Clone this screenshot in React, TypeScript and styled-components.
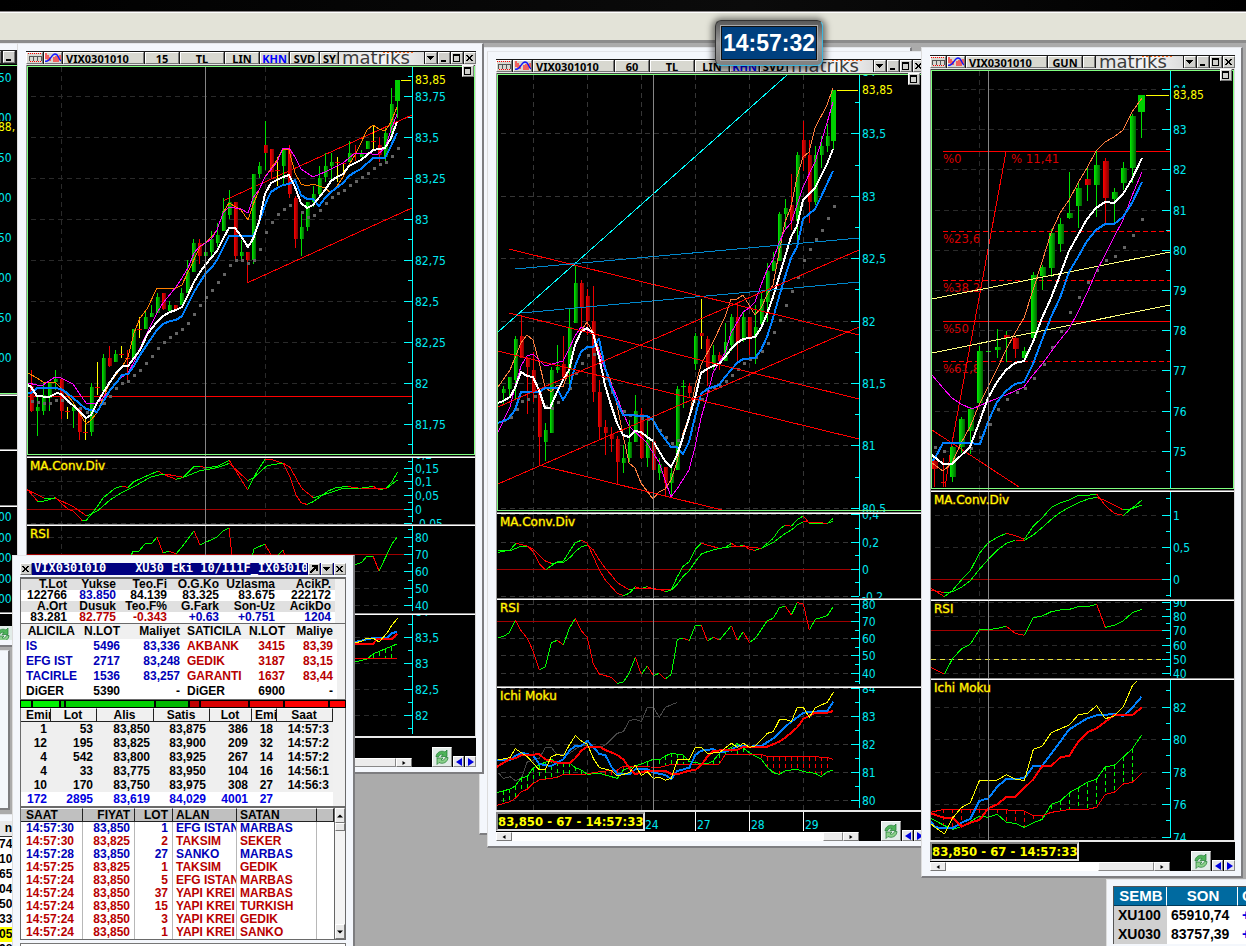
import React from "react";
import styled, { createGlobalStyle, css } from "styled-components";

const GlobalStyle = createGlobalStyle`
  * { box-sizing: border-box; }
  body { margin: 0; background: #ababab; font-family: "Liberation Sans", Arial, sans-serif; }
  button { font: inherit; padding: 0; margin: 0; cursor: default; }
`;

/* ---------- geometry helpers ---------- */

type Pt = [number, number];
type Candle = [number, number, number, number, number, string];
type Line = { d: string; c: string; w?: number; dash?: string };

const parse = (s: string): Pt[] =>
  s.trim().split(/\s+/).map((p) => p.split(",").map(Number) as Pt);

/* samples recorded at three units per pixel, relative to an origin */
const fine = (ox: number, oy: number, s: string): Pt[] =>
  parse(s).map(([x, y]) => [ox + x / 3, oy + y / 3] as Pt);

const pathOf = (pts: Pt[]) => "M" + pts.map((p) => p.join(" ")).join("L");
const line = (s: string, c: string, w = 1): Line => ({ d: pathOf(parse(s)), c, w });
const fineLine = (ox: number, oy: number, s: string, c: string, w = 1): Line => ({
  d: pathOf(fine(ox, oy, s)),
  c,
  w,
});

const candles = (s: string): Candle[] =>
  s.trim().split(/\s*;\s*/).filter(Boolean).map((row) => {
    const f = row.split(/\s+/);
    return [+f[0], +f[1], +f[2], +f[3], +f[4], f[5]] as Candle;
  });

/* rising parts green, falling parts red */
const trend = (pts: Pt[]): Line[] => {
  let up = "";
  let down = "";
  for (let i = 1; i < pts.length; i++) {
    const seg = `M${pts[i - 1].join(" ")}L${pts[i].join(" ")}`;
    if (pts[i][1] > pts[i - 1][1]) down += seg;
    else up += seg;
  }
  return [
    { d: up, c: "#00ff00" },
    { d: down, c: "#ff0000" },
  ];
};

const valueAt = (pts: Pt[], x: number) => {
  for (let i = 1; i < pts.length; i++) {
    if (x <= pts[i][0]) {
      const [x0, y0] = pts[i - 1];
      const [x1, y1] = pts[i];
      return y0 + ((y1 - y0) * (x - x0)) / (x1 - x0);
    }
  }
  return pts[pts.length - 1][1];
};

/* kumo: two bounds with a dashed fill between them */
const cloud = (a: Pt[], b: Pt[], step: number, from: number): Line[] => {
  let g = "";
  let r = "";
  const end = a[a.length - 1][0] - 2;
  for (let x = from; x < end; x += step) {
    const ya = valueAt(a, x);
    const yb = valueAt(b, x);
    if (Math.abs(ya - yb) < 3) continue;
    const seg = `M${x} ${Math.min(ya, yb)}V${Math.max(ya, yb)}`;
    if (ya < yb) g += seg;
    else r += seg;
  }
  return [
    { d: g, c: "#00ff00", dash: "4 3" },
    { d: r, c: "#ff0000", dash: "4 3" },
    { d: pathOf(a), c: "#00ff00" },
    { d: pathOf(b), c: "#ff0000" },
  ];
};

/* ---------- window chrome ---------- */

const Desktop = styled.main`
  position: relative;
  height: 100vh;
  min-height: 600px;
  overflow: hidden;
  background: #ababab;
`;

const TopBlack = styled.div`
  height: 12px;
  background: linear-gradient(90deg, #000, #0b0b0b 60%, #000);
  border-bottom: 1px solid #8a8688;
`;

const TopBar = styled.header`
  height: 31px;
  background: #e3e3d8;
  border-top: 1px solid #fff;
  border-bottom: 3px solid #8c8c8c;
`;

const Frame = styled.section<{ $x: number; $y: number; $w: number; $h?: number }>`
  position: absolute;
  left: ${(p) => p.$x}px;
  top: ${(p) => p.$y}px;
  width: ${(p) => p.$w}px;
  ${(p) => p.$h && css`height: ${p.$h}px;`}
  display: flex;
  flex-direction: column;
  background: #f4f7fc;
  border: solid;
  border-width: 1px 2px 2px 1px;
  border-color: #e4e6ea #7d7d80 #7d7d80 #dcdcdc;
  padding: 7px 6px 5px 8px;
  overflow: hidden;
`;

const Toolbar = styled.div`
  display: flex;
  height: 14px;
  padding: 1px 0;
  background: #1a1a1a;
  gap: 1px;
  border-bottom: 1px solid #e8e8e8;
`;

const Tool = styled.button<{ $w: number; $on?: boolean; $left?: boolean }>`
  flex: none;
  width: ${(p) => p.$w}px;
  height: 12px;
  border: 1px solid;
  border-color: #fff #777 #777 #fff;
  background: #d8d8d0;
  overflow: hidden;
  white-space: nowrap;
  font: bold 11px/9px "Noto Sans", sans-serif;
  color: ${(p) => (p.$on ? "#0000ff" : "#000")};
  text-align: ${(p) => (p.$left ? "left" : "center")};
  padding-left: ${(p) => (p.$left ? 2 : 0)}px;
  display: block;
`;

const Logo = styled.div`
  flex: 1;
  min-width: 0;
  height: 12px;
  padding-left: 3px;
  background:
    repeating-linear-gradient(90deg, #ff6a20 0 2px, transparent 2px 4px) 80% 0 / 30px 1px no-repeat,
    linear-gradient(90deg, #e0e0e0, #f6f6f6 60%, #dcdcdc);
  color: #3c3c3c;
  font: 18px/11px "DejaVu Sans", sans-serif;
  overflow: hidden;
`;

const CapButton = styled.button`
  flex: none;
  width: 12px;
  height: 12px;
  display: grid;
  place-items: center;
  background: #d0d0cc;
  border: 1px solid;
  border-color: #fff #777 #777 #fff;
`;

const Glyph = ({ d, size = 8 }: { d: string; size?: number }) => (
  <svg width={size} height={size} viewBox="0 0 8 8" shapeRendering="crispEdges">
    <path d={d} fill="#000" fillRule="evenodd" />
  </svg>
);
const DOWN = "M0 2h7v1H6v1H5v1H4v1H3V5H2V4H1V3H0z";
const MIN = "M1 6h5v2H1z";
const MAX = "M0 0h7v8H0zM1 2h5v5H1z";
const CLOSE = "M0 1h2v1h1v1h1V2h1V1h2v1H6v1H5v2h1v1h1v1H5V6H4V5H3v1H2v1H0V6h1V5h1V3H1V2H0z";

const BarsIcon = () => (
  <svg width="14" height="10" viewBox="0 0 14 10" shapeRendering="crispEdges">
    <path d="M0 .5h14M2 8.500h11" stroke="#f00" strokeDasharray="1 1" />
    <path d="M1 8V3h12v5M5 3v5M9 3v5" fill="none" stroke="#555" />
  </svg>
);
const WaveIcon = () => (
  <svg width="16" height="10" viewBox="0 0 16 10">
    <path d="M1 0v6M3 2v5M5 4v4M9 4v5M11 3v6M13 3v6M15 2v5" stroke="#f22" strokeWidth="1.300" />
    <path d="M0 8C5 10 6 1 10 1s3 5 6 7" fill="none" stroke="#11f" strokeWidth="1.300" />
  </svg>
);

const Captions = () => (
  <>
    <CapButton aria-label="Menu"><Glyph d={DOWN} /></CapButton>
    <CapButton aria-label="Minimize"><Glyph d={MIN} /></CapButton>
    <CapButton aria-label="Maximize"><Glyph d={MAX} /></CapButton>
    <CapButton aria-label="Close"><Glyph d={CLOSE} /></CapButton>
  </>
);

/* ---------- charts ---------- */

const Body = styled.div`
  position: relative;
  display: flex;
  flex-direction: column;
`;

const Restore = styled(CapButton)<{ $x: number }>`
  position: absolute;
  left: ${(p) => p.$x}px;
  top: 0;
`;

const PaneSvg = styled.svg`
  display: block;
  background: #000;
  text {
    font-family: "DejaVu Sans Condensed", "DejaVu Sans", sans-serif;
    font-size: 12px;
  }
  text.title { font-family: "DejaVu Sans", sans-serif; }
  text.note { font-size: 13px; }
`;

const SIGNAL: Record<string, string> = { g: "#00e000", r: "#f00000", y: "#ffff00" };

type PaneProps = {
  x: number; y: number; w: number; h: number; axis: number;
  ticks: [number, string][];
  minor?: number[];
  grid: number[];
  cross: number;
  gridEnd: number;
  gridColor?: string;
  title?: string;
  main?: boolean;
  rule?: number[];
  lines?: Line[];
  bars?: Candle[];
  barWidth?: number;
  under?: Line[];
  dots?: string;
  price?: [number, number];
  notes?: [number, number, string][];
};

const Pane = (p: PaneProps) => {
  const right = p.x + p.w - 1;
  const bottom = p.y + p.h;
  const bw = p.barWidth ?? 4;
  const top = p.y + 2;
  const gridColor = p.gridColor ?? "#2a2a2a";
  return (
    <PaneSvg width="100%" height={p.h} viewBox={`${p.x} ${p.y} ${p.w} ${p.h}`} preserveAspectRatio="xMinYMin slice">
      <defs>
        <linearGradient id="up"><stop offset="0" stopColor="#00f000" /><stop offset="1" stopColor="#006000" /></linearGradient>
        <linearGradient id="down"><stop offset="0" stopColor="#ff0000" /><stop offset="1" stopColor="#800000" /></linearGradient>
      </defs>
      <g shapeRendering="crispEdges" fill="none">
        {p.grid.map((gx) => (
          <path key={gx} d={`M${gx + 0.5} ${top}V${bottom}`} stroke={gridColor} strokeDasharray="5 4" />
        ))}
        {p.ticks.map(([ty]) => (
          <path key={ty} d={`M${p.x + 5} ${ty + 0.5}H${p.gridEnd}`} stroke={gridColor} strokeDasharray="5 4" />
        ))}
        {p.rule?.map((ry) => <path key={ry} d={`M${p.x + 1} ${ry + 0.5}H${p.axis}`} stroke="#a00000" />)}
        {p.under?.map((l, i) => <path key={i} d={l.d} stroke={l.c} strokeWidth={l.w ?? 1} strokeDasharray={l.dash} />)}
      </g>
      {p.notes?.map(([nx, ny, t]) => <text key={t} className="note" x={nx} y={ny} fill="#d80000">{t}</text>)}
      <g shapeRendering="crispEdges">
        {p.bars?.map(([bx, hi, lo, t, b, k], i, all) => {
          const last = i === all.length - 1;
          const wick = SIGNAL[k[0]];
          const body = k[k.length - 1];
          const half = last ? bw / 2 + 0.5 : bw / 2;
          return (
            <g key={bx}>
              <rect x={bx} y={hi} width="1" height={Math.max(lo - hi, 1)} fill={wick} />
              {body === "y" || b - t < 2 ? (
                <rect x={bx - 2} y={t} width="5" height="1" fill={body === "g" ? SIGNAL.g : SIGNAL.r} />
              ) : (
                <rect x={Math.round(bx + 0.5 - half)} y={t} width={half * 2} height={b - t}
                  fill={last ? "#00d000" : body === "g" ? "url(#up)" : "url(#down)"} />
              )}
            </g>
          );
        })}
      </g>
      <g shapeRendering="crispEdges" fill="none" strokeLinejoin="round">
        {p.dots && parse(p.dots).map(([dx, dy], i) => (
          <rect key={i} x={dx - 1} y={dy - 1} width="3" height="3" fill="#646464" />
        ))}
        {p.lines?.map((l, i) => (
          <path key={i} d={l.d} stroke={l.c} strokeWidth={l.w ?? 1} strokeDasharray={l.dash} />
        ))}
        <path d={`M${p.cross + 0.5} ${p.y}V${bottom}`} stroke="#868686" />
        <path d={`M${p.axis + 0.5} ${top}V${bottom - 2}`} stroke="#00ffff" />
        {p.ticks.map(([ty]) => <path key={ty} d={`M${p.axis - 8} ${ty + 0.5}H${p.axis}`} stroke="#00ffff" />)}
        {p.minor?.map((ty) => <path key={ty} d={`M${p.axis - 4} ${ty + 0.5}H${p.axis}`} stroke="#00ffff" />)}
      </g>
      {p.ticks.map(([ty, t]) => <text key={t} x={p.axis + 3} y={ty + 5} fill="#00e8f0">{t}</text>)}
      {p.price && (
        <>
          <rect x={p.axis + 2} y={p.price[1] - 7} width="40" height="12" fill="#000" />
          <path d={`M${p.price[0]} ${p.price[1] + 0.5}H${p.axis - 1}`} stroke="#ffff00" shapeRendering="crispEdges" />
          <text x={p.axis + 3} y={p.price[1] + 4} fill="#ffff00">83,85</text>
        </>
      )}
      {p.title && (
        <text className="title" x={p.x + 4} y={p.y + 14} fill="#ffff00" stroke="#ffa000" strokeOpacity="0.500" strokeWidth="1" paintOrder="stroke">{p.title}</text>
      )}
      <g shapeRendering="crispEdges" fill="none">
        {p.main ? (
          <>
            <rect x={p.x + 1.5} y={p.y + 1.5} width={p.w - 3} height={p.h - 3} stroke="#80ff80" />
            <path d={`M${p.x} ${p.y + 0.5}H${right}`} stroke="#444" />
          </>
        ) : (
          <>
            <path d={`M${p.x} ${p.y + 0.5}H${right + 1}`} stroke="#909090" />
            <path d={`M${p.x} ${p.y + 1.5}H${right + 1}`} stroke="#ffffff" />
          </>
        )}
        <path d={`M${p.x + 0.5} ${p.y}V${bottom}`} stroke="#9a9a9a" />
        <path d={`M${right + 0.5} ${p.y}V${bottom}`} stroke="#d8d8d8" />
      </g>
    </PaneSvg>
  );
};

/* ---------- footer ---------- */

const Footer = styled.div`
  display: flex;
  align-items: flex-end;
  height: 31px;
  background: #000;
  border-top: 2px solid #e8e8e8;
`;
const FootLeft = styled.div<{ $w: number }>`
  flex: none;
  width: ${(p) => p.$w}px;
  height: 100%;
  display: flex;
  flex-direction: column;
  justify-content: space-between;
`;
const Dates = styled.div`
  display: flex;
  height: 19px;
`;
const Info = styled.output`
  flex: none;
  width: 149px;
  height: 19px;
  border: 2px solid #e0e0e0;
  border-left-color: #888;
  border-top-color: #888;
  color: #ffff00;
  font: bold 13px/16px "DejaVu Sans Condensed", "DejaVu Sans", sans-serif;
  white-space: nowrap;
  overflow: hidden;
`;
const DateCell = styled.span<{ $mark?: boolean }>`
  flex: none;
  width: ${(p) => (p.$mark ? 54 : 50)}px;
  padding: 6px 0 0 1px;
  border-left: ${(p) => (p.$mark ? "1px solid #fff" : "0")};
  color: #00e8f0;
  font: 12px/14px "DejaVu Sans Condensed", "DejaVu Sans", sans-serif;
  &:nth-child(2) { padding-left: 0; }
`;
const ScrollRow = styled.div`
  display: flex;
  height: 9px;
  margin-top: auto;
  background: #fff;
`;
const ScrollEnd = styled.button`
  width: 16px;
  height: 9px;
  display: grid;
  place-items: center;
  border: 1px solid;
  border-color: #fff #777 #777 #fff;
  background: #ececec;
`;
const Track = styled.div<{ $thumb: number }>`
  flex: 1;
  display: flex;
  justify-content: flex-end;
  &::after {
    content: "";
    width: ${(p) => p.$thumb}px;
    border: 1px solid;
    border-color: #fff #888 #888 #fff;
    background: #ececec;
  }
`;
const FootIcons = styled.div`
  display: flex;
  align-items: flex-end;
  margin-left: auto;
  gap: 1px;
`;
const SquareButton = styled.button<{ $s: number }>`
  flex: none;
  width: ${(p) => p.$s}px;
  height: ${(p) => p.$s}px;
  display: grid;
  place-items: center;
  background: #e6e6ea;
  border: 1px solid;
  border-color: #fff #888 #888 #fff;
`;
const RefreshIcon = () => (
  <svg width="18" height="18" viewBox="0 0 18 18">
    <rect width="18" height="18" fill="#e2ece8" />
    <path d="M3 9a6 6 0 0 1 9-5l2-2v6.500H8l2-2a3.500 3.500 0 0 0-4.500 2.500z" fill="#4fb45a" stroke="#1d7a30" strokeWidth=".7" />
    <path d="M15 9.500a6 6 0 0 1-9 5l-2 2V10h6l-2 2a3.500 3.500 0 0 0 4.500-2.500z" fill="#8ad08a" stroke="#1d7a30" strokeWidth=".7" />
  </svg>
);
const Tri = ({ d, c = "#000", s = 8 }: { d: string; c?: string; s?: number }) => (
  <svg width={s} height={s} viewBox="0 0 8 8"><path d={d} fill={c} /></svg>
);
const LEFT = "M7 0v8L1 4z";
const RIGHT = "M1 0v8l6-4z";

const ChartFooter = ({ axis, thumb, info, dates }: { axis: number; thumb: number; info?: boolean; dates?: boolean }) => (
  <Footer>
    <FootLeft $w={axis}>
      {info && (
        <Dates>
          <Info>83,850 - 67 - 14:57:33</Info>
          {dates && (
            <>
              <DateCell>24</DateCell>
              <DateCell $mark>27</DateCell>
              <DateCell $mark>28</DateCell>
              <DateCell $mark>29</DateCell>
            </>
          )}
        </Dates>
      )}
      <ScrollRow>
        <ScrollEnd aria-label="Scroll left"><Tri d={LEFT} s={4} /></ScrollEnd>
        <Track $thumb={thumb} />
        <ScrollEnd aria-label="Scroll right"><Tri d={RIGHT} s={4} /></ScrollEnd>
      </ScrollRow>
    </FootLeft>
    <FootIcons>
      <SquareButton $s={20} aria-label="Refresh"><RefreshIcon /></SquareButton>
      <SquareButton $s={11} aria-label="Previous"><Tri d={LEFT} c="#0000e0" /></SquareButton>
      <SquareButton $s={11} aria-label="Next"><Tri d={RIGHT} c="#0000e0" /></SquareButton>
    </FootIcons>
  </Footer>
);

/* ---------- chart data: 15 minutes ---------- */

const ORANGE = "#ff8000";
const CORAL = "#ff7f40";
const MAGENTA = "#ff00ff";
const BLUE = "#0080ff";

const bars15 = candles(`
31 370 412 386 411 r;37 397 436 407 411 g;43 383 415 395 411 g;49 383 411 383 398 g;55 370 390 379 382 g;61 378 419 379 411 r;
67 407 419 411 411 y;73 403 428 407 411 g;79 407 440 408 432 r;85 418 440 432 432 y;91 383 436 387 432 g;97 362 395 387 387 y;
103 354 393 358 391 g;109 346 367 358 366 r;115 350 362 354 362 g;121 346 358 354 354 y;127 350 380 358 358 r;133 329 358 329 358 g;
139 317 338 329 329 y;145 310 329 317 329 g;151 305 317 313 317 g;157 293 313 297 313 g;163 293 310 293 309 r;169 301 312 305 311 g;
175 305 310 305 310 r;181 288 305 293 305 g;187 260 293 272 293 g;193 239 272 243 272 g;199 239 264 243 256 r;205 250 256 252 256 g;
211 231 256 239 252 g;217 223 247 235 243 g;223 198 231 211 231 g;229 190 219 202 215 g;235 202 260 202 256 r;241 240 262 252 256 g;
247 252 283 252 260 r;253 174 264 174 260 g;259 162 178 166 174 g;265 121 170 145 153 gr;271 149 178 149 172 r;277 157 186 170 170 y;
283 149 185 149 166 g;289 145 198 150 194 r;295 196 248 198 239 r;301 213 256 227 239 g;307 202 231 202 227 g;313 186 207 194 202 g;
319 166 195 178 194 g;325 153 182 166 177 g;331 153 182 162 166 g;337 157 182 162 162 y;343 163 173 163 163 y;349 141 162 153 162 g;
355 145 161 153 153 r;361 150 157 153 157 g;367 141 149 141 149 g;373 125 149 141 141 y;379 137 162 145 155 r;385 128 161 133 157 g;
391 88 140 104 133 g;397 80 118 80 101 g`);

const lines15: Line[] = [
  line("28,373 37,378 43,382 55,382 61,388 73,402 86,424 91,420 97,413 103,398 110,383 122,367 128,357 134,333 140,318 147,309 157,288 163,288 170,289 176,288 182,285 188,272 200,247 206,242 213,235 217,230 223,213 229,203 241,210 248,220 253,205 259,190 265,177 277,160 283,149 289,150 295,173 301,184 307,186 313,184 325,188 331,193 337,186 343,177 349,165 355,155 361,143 367,130 373,125 379,129 385,131 391,122 397,107", ORANGE),
  line("28,383 37,385 43,385 55,377 61,378 73,384 79,393 86,403 97,403 103,398 110,390 122,377 128,373 134,362 140,348 147,333 157,313 163,303 176,287 182,278 188,268 194,253 200,246 206,243 212,238 217,230 223,213 229,207 241,209 248,213 253,198 259,190 265,177 277,162 283,148 289,148 295,157 301,169 313,177 325,172 343,163 355,153 367,153 377,155 385,148 391,130 397,114", MAGENTA),
  line("28,393 31,393 37,388 55,388 61,389 67,393 73,398 79,403 86,409 91,410 97,412 103,402 110,390 117,382 122,375 128,374 134,366 140,355 148,343 157,330 163,324 170,321 176,320 182,316 188,304 194,292 200,282 206,273 212,267 217,260 223,248 229,236 253,236 257,228 262,214 267,200 271,192 277,188 283,185 289,184 295,180 301,195 307,199 313,199 319,206 325,198 331,192 343,183 349,176 355,172 361,169 373,158 385,158 391,146 397,133", BLUE, 2),
  line("28,385 31,387 37,396 49,397 57,393 61,394 67,400 78,410 86,418 91,415 97,403 103,393 110,382 117,372 123,366 128,366 134,358 140,350 148,333 157,322 163,316 170,312 176,310 182,307 188,295 194,282 200,272 206,264 217,251 223,239 229,228 235,228 241,236 248,247 253,239 259,222 265,194 271,183 283,177 289,175 295,187 301,203 307,208 313,205 325,190 331,181 337,177 343,174 349,166 355,163 361,160 367,155 373,150 379,149 385,148 391,138 397,122", "#fff", 2),
];
const dots15 =
  "32,401 38,402 44,403 50,403 56,400 62,400 68,401 80,408 87,412 104,403 110,396 116,388 122,383 128,381 134,375 140,370 146,363 152,356 158,348 164,342 170,337 176,333 182,329 188,323 194,314 200,305 206,297 212,290 218,282 224,274 230,265 236,260 242,260 248,263 254,260 260,249 266,232 272,222 278,214 284,209 290,205 302,212 308,217 314,215 320,210 326,203 332,197 338,193 344,190 350,185 356,181 362,177 368,173 374,168 380,164 386,162 392,156 398,148";

const Chart15 = () => {
  const base = { x: 26, w: 450, axis: 412, grid: [61, 265], cross: 205, gridEnd: 400 };
  const up: Pt[] = parse("355,662 367,659 373,654 385,649 397,644");
  return (
    <Frame $x={17} $y={43} $w={467}>
      <Toolbar>
        <Tool $w={17} aria-label="Bars"><BarsIcon /></Tool>
        <Tool $w={18} aria-label="Indicators"><WaveIcon /></Tool>
        <Tool $w={81} $left>VIX0301010</Tool>
        <Tool $w={34}>15</Tool>
        <Tool $w={44}>TL</Tool>
        <Tool $w={34}>LIN</Tool>
        <Tool $w={29} $on>KHN</Tool>
        <Tool $w={29}>SVD</Tool>
        <Tool $w={18} $left>SYM</Tool>
        <Logo>matriks</Logo>
        <Captions />
      </Toolbar>
      <Body>
        <Pane {...base} y={65} h={391} main barWidth={4}
          ticks={[[96, "83,75"], [137, "83,5"], [178, "83,25"], [219, "83"], [260, "82,75"], [301, "82,5"], [342, "82,25"], [383, "82"], [424, "81,75"]]}
          minor={[76, 117, 157, 198, 239, 280, 321, 362, 403, 444]}
          under={[line("28,396 412,396", "#f00"), line("223,201 412,115", "#f00"), line("247,283 412,208", "#f00")]}
          bars={bars15} lines={lines15} dots={dots15} price={[401, 80]} />
        <Pane {...base} y={456} h={68} title="MA.Conv.Div" rule={[509]}
          ticks={[[454, "0,2"], [468, "0,15"], [481, "0,1"], [495, "0,05"], [509, "0"], [523, "-0,05"]]} minor={[461, 474, 488, 502, 516]}
          lines={[
            ...trend(fine(0, 230, "82,778 112,813 133,813 166,803 184,820 205,838 220,843 247,872 260,870 292,830 310,803 345,775 365,768 384,772 402,755 430,742 475,723 490,733 528,748 550,742 582,710 600,709 618,713 652,709 688,691 715,735 743,780 762,740 795,688 820,690 850,700 870,740 887,793 905,820 922,823 940,815 985,783 1010,772 1045,770 1080,775 1120,769 1140,780 1160,773 1175,757 1192,727")),
            ...trend(fine(0, 230, "82,780 133,804 166,804 184,813 220,830 260,858 292,843 330,810 365,788 402,770 450,742 480,734 495,732 550,742 600,722 652,713 688,700 743,752 762,742 800,708 820,703 850,700 870,712 905,775 940,803 985,790 1030,775 1080,774 1160,775 1192,750")),
          ]} />
        <Pane {...base} y={524} h={89} title="RSI" rule={[554]}
          ticks={[[537, "80"], [554, "70"], [571, "60"], [588, "50"], [605, "40"]]} minor={[529, 546, 563, 580, 597]}
          lines={trend(parse("131,556 133,551 139,551 145,544 152,543 157,537 163,553 169,551 176,554 182,547 194,531 200,545 217,537 223,531 229,528 232,556 240,590 250,565 254,549 265,544 271,555 278,555 283,550 286,558 300,600 340,580 355,565 362,562 367,556 373,556 379,571 392,544 397,537"))} />
        <Pane {...base} y={613} h={123}
          ticks={[[611, "84"], [637, "83,5"], [663, "83"], [689, "82,5"], [715, "82"]]} minor={[624, 650, 676, 702, 728]}
          lines={[
            ...cloud(up, parse("355,658 397,658"), 6, 373),
            line("355,642 373,638 387,638 392,633 397,632", BLUE, 2),
            line("355,644 373,644 377,639 392,639 397,634", "#f00", 2),
            line("355,643 362,641 367,638 373,638 379,642 387,633 392,625 398,618", "#ff0"),
          ]} />
        <Restore $x={436} aria-label="Restore"><Glyph d={MAX} /></Restore>
      </Body>
      <ChartFooter axis={386} thumb={60} />
    </Frame>
  );
};

/* ---------- chart data: 60 minutes ---------- */

const bars60 = candles(`
503 386 405 389 393 g;509 377 398 377 389 g;515 336 399 339 380 g;521 315 358 336 358 r;527 357 414 358 367 r;533 352 402 370 391 r;
539 390 466 391 437 r;545 423 461 430 442 g;551 367 433 370 433 g;557 345 373 367 370 g;563 336 377 364 377 r;569 308 387 327 370 g;
575 265 323 283 323 g;581 280 327 283 308 r;587 289 335 296 321 r;593 286 402 321 392 r;599 380 440 392 427 r;605 420 455 427 433 r;
611 427 452 434 439 r;617 436 484 439 462 r;623 445 473 458 463 g;629 420 462 442 458 g;635 395 442 411 442 g;641 408 459 414 458 r;
647 420 467 440 458 g;653 440 470 441 470 r;659 458 480 464 473 g;665 467 496 467 483 r;671 465 497 473 483 g;677 386 470 389 470 g;
683 380 408 386 387 g;689 383 397 386 393 r;695 333 370 336 364 g;701 299 349 333 336 yr;707 336 386 339 367 r;713 345 370 355 364 g;
719 352 370 355 361 r;725 323 361 342 361 g;731 314 351 317 345 g;737 303 361 317 342 r;743 312 342 317 339 g;749 317 355 317 339 r;
755 305 364 327 336 g;761 292 327 299 324 g;767 263 322 271 302 g;773 252 271 261 271 g;779 212 261 214 261 g;785 199 230 208 214 g;
791 174 230 205 221 r;797 152 242 155 221 g;803 121 171 140 158 r;809 140 223 155 202 r;815 146 205 155 202 g;821 136 168 146 155 g;
827 124 152 136 146 g;833 90 149 90 141 g`);

const lines60: Line[] = [
  line("498,387 510,370 521,343 527,335 533,340 539,362 545,387 551,392 557,385 563,387 569,370 575,347 581,331 587,322 593,332 599,350 605,367 611,382 617,405 623,435 629,463 635,468 641,483 653,499 659,492 665,489 671,480 677,462 683,433 689,417 695,387 701,365 713,342 725,317 731,299 737,299 743,295 755,315 761,308 767,295 773,285 779,253 785,222 791,207 797,177 803,157 809,152 815,128 827,105 833,88", CORAL),
  line("498,432 510,407 515,387 521,366 527,356 533,354 545,366 563,361 569,349 575,336 581,327 587,330 593,333 599,352 605,370 617,397 623,413 629,426 647,443 653,453 659,462 665,480 671,497 677,489 689,470 695,447 701,418 707,397 713,373 725,353 731,333 743,312 749,308 755,302 761,285 767,270 773,260 779,243 785,230 791,223 803,187 815,162 827,123 833,102", MAGENTA),
  line("498,423 508,419 515,410 521,392 539,392 545,388 557,388 563,400 569,390 575,366 581,352 587,347 593,347 599,339 605,367 611,387 617,402 623,415 647,416 653,420 659,431 671,447 677,447 683,454 689,442 695,417 701,394 707,389 719,385 725,377 731,370 737,363 743,359 755,358 761,350 767,337 773,318 779,297 785,277 791,258 797,247 803,219 815,209 821,197 827,184 833,171", BLUE, 2),
  line("498,403 503,401 510,397 515,388 521,372 527,376 533,377 539,390 545,408 550,408 557,392 563,380 569,370 575,345 581,332 587,328 593,333 599,357 605,385 611,405 617,423 623,435 629,437 635,431 641,432 647,437 653,441 659,451 665,461 671,467 677,455 683,437 689,418 695,398 701,373 707,369 713,366 719,364 725,357 731,349 737,343 743,339 755,337 761,328 767,314 773,297 779,277 785,257 791,237 797,226 803,200 815,188 827,164 833,149", "#fff", 2),
  line("498,332 787,75", "#00ffff"),
  line("515,269 859,238", "#0088cc"),
  line("521,313 859,282", "#0088cc"),
  line("509,249 859,335", "#f00"),
  line("509,313 859,399", "#f00"),
  line("498,351 859,439", "#f00"),
  line("539,465 722,510", "#f00"),
  line("498,484 859,327", "#f00"),
  line("498,407 859,250", "#f00"),
];
const dots60 =
  "504,420 511,417 517,409 522,401 528,399 535,396 546,406 552,408 558,402 570,388 576,373 582,363 588,355 594,354 600,363 606,378 612,392 618,402 624,411 630,415 636,415 642,418 648,419 654,423 660,430 666,437 672,443 678,440 702,399 708,391 714,387 720,386 726,381 732,375 738,369 744,363 750,359 756,357 762,351 768,343 774,332 780,320 786,305 792,291 798,277 804,260 810,249 816,239 822,230 828,218 834,206";

const Chart60 = () => {
  const base = { x: 496, w: 429, axis: 859, grid: [533, 587, 641, 695, 749, 803], cross: 653, gridEnd: 850, gridColor: "#363636" };
  const f = (s: string) => fine(485, 510, s);
  const l = (s: string, c: string, w = 1) => fineLine(485, 510, s, c, w);
  return (
    <Frame $x={487} $y={51} $w={446}>
      <Toolbar>
        <Tool $w={16} aria-label="Bars"><BarsIcon /></Tool>
        <Tool $w={19} aria-label="Indicators"><WaveIcon /></Tool>
        <Tool $w={81} $left>VIX0301010</Tool>
        <Tool $w={34}>60</Tool>
        <Tool $w={44}>TL</Tool>
        <Tool $w={34}>LIN</Tool>
        <Tool $w={29} $on>KHN</Tool>
        <Tool $w={27}>SVD</Tool>
        <Logo>matriks</Logo>
        <Captions />
      </Toolbar>
      <Body>
        <Pane {...base} y={73} h={439} main
          ticks={[[71, "84"], [133, "83,5"], [196, "83"], [258, "82,5"], [321, "82"], [383, "81,5"], [445, "81"], [508, "80,5"]]}
          minor={[102, 165, 227, 289, 352, 414, 477]}
          bars={bars60} lines={lines60} dots={dots60} price={[837, 90]} />
        <Pane {...base} y={512} h={86} title="MA.Conv.Div" rule={[569]}
          ticks={[[514, "0,4"], [542, "0,2"], [569, "0"], [596, "-0,2"]]} minor={[528, 555, 582]}
          lines={[
            ...trend(f("40,127 75,120 93,100 127,108 145,125 163,162 181,180 217,155 235,153 253,125 271,98 289,91 307,100 325,140 343,180 361,210 379,230 397,250 415,257 433,250 451,230 469,236 487,230 505,236 523,238 541,245 559,240 577,200 595,168 613,155 631,118 649,100 685,110 703,115 721,113 739,100 757,110 775,106 793,118 811,121 829,115 865,85 883,58 901,45 919,49 937,28 955,18 973,40 1027,40 1045,25")),
            ...trend(f("40,122 75,122 110,108 127,108 145,118 181,153 199,160 235,157 253,145 271,125 289,110 307,105 325,120 343,150 361,175 379,195 397,218 433,240 451,235 505,237 559,240 577,222 595,198 613,182 631,155 649,132 667,125 703,115 739,110 793,111 829,115 865,97 901,70 919,60 937,45 955,35 1027,40 1045,33")),
          ]} />
        <Pane {...base} y={598} h={88} title="RSI" rule={[621]}
          ticks={[[604, "80"], [621, "70"], [638, "60"], [655, "50"], [673, "40"]]} minor={[612, 630, 647, 664, 681]}
          lines={trend(f("40,383 58,378 73,368 91,331 109,363 127,385 145,425 163,480 181,470 199,398 217,391 235,405 253,355 271,325 289,362 307,383 325,462 343,492 379,502 397,520 415,517 433,488 451,442 469,493 487,468 505,497 523,490 541,507 559,493 577,388 595,385 613,392 631,346 649,346 667,393 685,382 703,391 739,347 757,391 775,365 793,398 811,385 847,332 865,325 883,293 901,289 919,315 937,278 955,282 973,360 991,328 1027,317 1045,290"))} />
        <Pane {...base} y={686} h={124} title="Ichi Moku"
          ticks={[[688, "84"], [716, "83"], [744, "82"], [772, "81"], [800, "80"]]} minor={[702, 730, 758, 786]}
          lines={[
            l("40,788 55,805 75,800 91,812 109,805 127,755 163,745 181,713 199,712 217,735 253,730 289,705 343,713 361,705 397,670 415,665 433,632 451,628 469,635 487,592 505,592 523,622 541,592 577,577", "#484848"),
            ...cloud(
              f("36,848 75,837 91,828 109,803 127,800 145,773 163,765 199,748 217,758 253,758 271,773 289,780 307,793 343,790 397,805 415,780 451,768 487,755 505,748 523,750 541,738 559,730 595,735 613,755 631,758 667,762 685,752 703,730 739,712 757,700 793,728 829,748 847,772 865,788 883,793 901,782 937,778 955,785 991,790 1009,800 1027,785 1045,780"),
              f("36,886 75,875 91,865 109,845 127,838 145,820 163,810 217,802 235,793 307,792 343,785 397,780 415,768 523,772 541,768 559,763 703,762 721,733 829,733 847,740 973,740 1027,742 1045,748"),
              6, 503),
            l("36,750 75,750 91,738 109,728 127,732 145,737 163,762 199,768 217,758 235,748 253,722 271,708 289,708 307,692 325,712 343,732 361,735 379,770 397,792 433,793 451,778 487,777 505,788 541,795 559,807 577,783 613,773 631,735 649,722 685,717 703,728 739,720 757,708 793,710 829,708 865,685 901,650 919,635 955,608 1027,602 1045,575", BLUE, 2),
            l("36,770 75,747 91,745 109,735 163,733 181,748 217,758 253,760 271,745 289,722 307,710 343,710 361,720 397,735 415,748 433,775 451,793 487,782 541,783 559,792 577,793 613,782 631,780 649,765 667,740 685,722 757,720 775,710 847,710 883,695 901,683 937,652 955,627 973,617 991,608 1027,608 1045,603", "#f00", 2),
            l("40,750 75,743 91,716 109,728 127,740 145,760 163,780 181,778 199,740 217,733 235,738 253,705 271,677 289,693 307,702 325,745 343,773 379,782 397,798 433,788 451,765 469,797 487,785 505,805 523,802 541,811 559,805 577,750 613,748 631,713 649,712 667,730 703,728 739,700 757,712 775,700 793,712 811,708 847,670 865,665 883,630 901,628 919,635 937,592 955,592 973,622 991,593 1027,577 1045,547", "#ff0"),
          ]} />
        <Restore $x={412} aria-label="Restore"><Glyph d={MAX} /></Restore>
      </Body>
      <ChartFooter axis={363} thumb={18} info dates />
    </Frame>
  );
};

/* ---------- chart data: daily ---------- */

const barsDay = candles(`
934 457 487 461 469 r;943 458 487 482 483 r;952 446 482 447 477 g;961 417 453 419 447 g;970 407 454 409 431 g;979 346 403 351 403 g;
988 351 352 351 352 g;997 329 358 347 350 g;1006 331 362 335 338 gr;1015 337 358 338 349 r;1024 347 358 351 358 g;1033 272 338 275 338 g;
1042 265 290 267 276 g;1051 229 277 233 268 g;1060 218 252 224 244 g;1069 172 219 213 218 g;1078 182 228 188 206 g;1087 167 201 179 185 gr;
1096 150 217 165 185 g;1105 158 223 161 198 r;1114 188 225 192 199 g;1123 162 190 168 183 g;1132 114 183 116 168 g;1141 95 138 95 112 g`);

const linesDay: Line[] = [
  line("932,299 1170,252", "#ffff80"),
  line("932,353 1170,305", "#ffff80"),
  line("932,463 943,471 952,463 961,443 970,427 979,405 988,387 997,369 1006,350 1015,333 1024,318 1033,290 1042,262 1051,233 1060,213 1069,200 1078,183 1087,168 1096,151 1105,142 1114,137 1123,130 1132,112 1142,98", CORAL),
  line("932,375 943,388 952,398 961,404 972,409 988,402 1006,395 1024,387 1033,375 1043,363 1051,352 1060,340 1069,329 1078,312 1088,291 1096,272 1105,255 1114,237 1123,220 1132,196 1142,172", MAGENTA),
  line("932,461 935,458 943,443 968,443 980,444 988,422 997,402 1006,391 1015,384 1024,382 1033,364 1042,340 1051,317 1060,298 1069,272 1078,257 1087,241 1096,230 1105,224 1114,224 1123,217 1132,203 1142,182", BLUE, 2),
  line("932,455 943,464 952,464 970,447 979,423 988,398 997,382 1006,370 1015,363 1024,361 1033,342 1042,318 1051,298 1060,275 1069,251 1078,235 1087,219 1096,208 1105,202 1114,203 1123,194 1132,179 1142,158", "#fff", 2),
];
const dotsDay =
  "935,447 944,451 971,448 980,437 990,424 998,409 1007,399 1017,392 1025,388 1034,378 1044,364 1052,347 1061,331 1070,312 1079,297 1088,282 1097,270 1106,260 1115,256 1124,247 1133,235 1142,219";

const ChartDay = () => {
  const base = { x: 930, w: 305, axis: 1170, grid: [979], cross: 988, gridEnd: 1160 };
  const f = (s: string) => fine(915, 480, s);
  const l = (s: string, c: string, w = 1) => fineLine(915, 480, s, c, w);
  return (
    <Frame $x={921} $y={47} $w={322}>
      <Toolbar>
        <Tool $w={16} aria-label="Bars"><BarsIcon /></Tool>
        <Tool $w={18} aria-label="Indicators"><WaveIcon /></Tool>
        <Tool $w={81} $left>VIX0301010</Tool>
        <Tool $w={34}>GUN</Tool>
        <Tool $w={12} aria-label="Blank" />
        <Logo>matriks</Logo>
        <Captions />
      </Toolbar>
      <Body>
        <Pane {...base} y={69} h={421} main barWidth={6}
          ticks={[[89, "84"], [129, "83"], [169, "82"], [210, "81"], [250, "80"], [290, "79"], [330, "78"], [370, "77"], [411, "76"], [451, "75"]]}
          minor={[109, 149, 190, 230, 270, 310, 350, 391, 431, 471]}
          under={[
            line("943,151 1170,151", "#f00"),
            { d: "M943 231.5H1170M943 280.5H1170M943 361.5H1170", c: "#f00", dash: "5 3" },
            line("943,321 1170,321", "#f00"),
            line("1006,152 980,293 952,443 945,487", "#f00"),
            line("932,430 1019,487", "#f00"),
          ]}
          notes={[[943, 163, "%0"], [1011, 163, "% 11,41"], [943, 243, "%23,6"], [943, 292, "%38,2"], [943, 333, "%50"], [943, 373, "%61,8"]]}
          bars={barsDay} lines={linesDay} dots={dotsDay} price={[1146, 95]} />
        <Pane {...base} y={490} h={109} title="MA.Conv.Div" rule={[579]}
          ticks={[[515, "1"], [547, "0,5"], [579, "0"]]} minor={[498, 531, 563, 595]}
          lines={[
            ...trend(f("48,325 88,350 112,332 139,300 166,272 193,220 220,188 247,172 274,160 301,167 328,178 355,138 382,113 409,82 436,69 463,60 490,46 520,46 545,42 571,77 598,100 625,106 680,61")),
            ...trend(f("48,330 88,338 112,335 139,322 166,302 193,268 220,238 247,210 274,190 301,180 328,181 355,165 382,142 409,118 436,97 463,82 490,68 520,57 545,52 571,62 598,75 625,90 652,86 680,75")),
          ]} />
        <Pane {...base} y={599} h={79} title="RSI" rule={[630]}
          ticks={[[602, "90"], [616, "80"], [630, "70"], [645, "60"], [659, "50"], [673, "40"]]} minor={[609, 623, 638, 652, 666]}
          under={[{ d: "M931 659.5H1162", c: "#e8e040", dash: "5 4" }]}
          lines={trend(f("48,562 88,583 112,537 139,507 166,493 193,449 220,449 247,445 274,439 301,460 328,466 355,413 382,408 409,395 436,390 463,388 490,380 517,380 545,373 571,442 598,436 625,422 652,398 680,388"))} />
        <Pane {...base} y={678} h={162} title="Ichi Moku"
          ticks={[[707, "82"], [739, "80"], [772, "78"], [804, "76"], [837, "74"]]} minor={[690, 723, 755, 788, 820]}
          lines={[
            ...cloud(
              f("48,1015 85,1035 112,1048 139,1040 166,1025 193,1008 220,1012 247,1003 274,1027 301,1030 328,1042 355,1028 382,1018 409,973 436,963 463,938 490,923 517,907 545,897 571,860 598,856 652,806 680,765"),
              f("48,997 85,988 247,988 328,993 355,1007 382,1007 409,997 436,993 463,988 517,988 545,982 571,943 598,937 625,912 652,907 680,880"),
              9, 943),
            l("48,1025 60,1042 112,1045 139,1028 166,1017 193,963 220,955 247,920 274,897 328,895 355,858 382,857 463,748 517,715 545,706 598,702 625,708 652,683 680,650", BLUE, 2),
            l("48,1000 85,1013 112,1013 139,1040 166,1028 193,1020 220,985 247,973 274,951 301,950 355,898 382,858 409,858 436,832 463,827 490,785 517,757 545,745 598,705 652,705 680,683", "#f00", 2),
            l("48,1032 88,1062 112,1015 139,983 166,968 193,902 247,900 274,884 301,897 328,902 355,808 382,798 409,758 463,735 490,704 517,700 545,677 571,716 598,708 625,680 652,617 665,603", "#ff0"),
          ]} />
        <Restore $x={290} aria-label="Restore"><Glyph d={MAX} /></Restore>
      </Body>
      <ChartFooter axis={240} thumb={54} info />
    </Frame>
  );
};

/* ---------- order book window ---------- */

const BookFrame = styled(Frame)`
  padding: 7px 7px 0 7px;
`;
const TitleBar = styled.div`
  display: flex;
  height: 12px;
  background: #000080;
  margin-bottom: 2px;
  gap: 1px;
`;
const Title = styled.h1`
  flex: 1;
  min-width: 0;
  margin: 0;
  overflow: hidden;
  white-space: pre;
  color: #fff;
  padding-left: 1px;
  font: bold 12px/11px "DejaVu Sans Mono", monospace;
`;
const Block = styled.div<{ $top?: number; $bottom?: number }>`
  flex: none;
  border: 1px solid #6a6a6a;
  border-top-width: ${(p) => p.$top ?? 1}px;
  border-bottom-width: ${(p) => p.$bottom ?? 0}px;
  background: #f0f0f0;
  display: flex;
`;
const Grid = styled.table<{ $w: number; $rh: number; $bg?: string }>`
  flex: none;
  width: ${(p) => p.$w}px;
  table-layout: fixed;
  border-collapse: separate;
  border-spacing: 0;
  background: ${(p) => p.$bg ?? "#fff"};
  font: bold 12px/${(p) => p.$rh}px "Liberation Sans", Arial, sans-serif;
  th, td {
    height: ${(p) => p.$rh}px;
    padding: 0 4px 0 3px;
    overflow: hidden;
    white-space: nowrap;
  }
  th:first-child, td:first-child { padding-left: 5px; }
`;
const Cell = styled.td<{ $c?: string; $a?: string; $bg?: string; $line?: boolean }>`
  color: ${(p) => p.$c ?? "#000"};
  text-align: ${(p) => p.$a ?? "right"};
  background: ${(p) => p.$bg ?? "transparent"};
  border-right: ${(p) => (p.$line ? "1px solid #b8b8b8" : "0")};
`;
const Head = styled.th<{ $a?: string; $bg?: string; $box?: boolean }>`
  text-align: ${(p) => p.$a ?? "right"};
  background: ${(p) => p.$bg ?? "#f0f0f0"};
  font-weight: bold;
  ${(p) => p.$box && css`
    line-height: 12px;
    border-right: 1px solid #222;
    border-bottom: 1px solid #222;
    border-top: 1px solid #fff;
  `}
`;
const Cols = ({ w }: { w: number[] }) => (
  <colgroup>{w.map((n, i) => <col key={i} style={{ width: n }} />)}</colgroup>
);
const DepthBar = styled.div`
  flex: none;
  display: flex;
  height: 8px;
  padding: 1px;
  gap: 2px;
  background: #000;
`;
const DepthPart = styled.i<{ $n: number; $c: string }>`
  flex: ${(p) => p.$n} 1 0;
  background: ${(p) => p.$c};
`;
const VScroll = styled.div`
  flex: 1;
  display: flex;
  flex-direction: column;
  border-left: 1px solid #666;
  background: #f4f4f4;
`;
const VButton = styled.button<{ $h: number; $low?: boolean }>`
  height: ${(p) => p.$h}px;
  margin-top: ${(p) => (p.$low ? "auto" : "0")};
  display: grid;
  place-items: center;
  background: #e8e8e8;
  border: 1px solid;
  border-color: #fff #777 #777 #fff;
`;
const NextPanel = styled.div`
  flex: 1;
  margin-top: 3px;
  border: 1px solid #777;
  background: #fff;
`;

const NAVY = "#0000b8";
const RED = "#b80000";

const stats = [
  { h: ["T.Lot", "Yukse", "Teo.Fi", "O.G.Ko", "Uzlasma", "AcikP."], v: ["122766", "83.850", "84.139", "83.325", "83.675", "222172"], c: ["", NAVY, "", "", "", ""] },
  { h: ["A.Ort", "Dusuk", "Teo.F%", "G.Fark", "Son-Uz", "AcikDo"], v: ["83.281", "82.775", "-0.343", "+0.63", "+0.751", "1204"], c: ["", RED, RED, NAVY, NAVY, NAVY] },
];
const brokers = [
  ["IS", "5496", "83,336", "AKBANK", "3415", "83,39"],
  ["EFG IST", "2717", "83,248", "GEDIK", "3187", "83,15"],
  ["TACIRLE", "1536", "83,257", "GARANTI", "1637", "83,44"],
  ["DiGER", "5390", "-", "DiGER", "6900", "-"],
];
const depth = [
  ["1", "53", "83,850", "83,875", "386", "18", "14:57:3"],
  ["12", "195", "83,825", "83,900", "209", "32", "14:57:2"],
  ["4", "542", "83,800", "83,925", "267", "14", "14:57:2"],
  ["4", "33", "83,775", "83,950", "104", "16", "14:56:1"],
  ["10", "170", "83,750", "83,975", "308", "27", "14:56:3"],
  ["172", "2895", "83,619", "84,029", "4001", "27", ""],
];
const trades = [
  ["14:57:30", "83,850", "1", "EFG ISTAN", "MARBAS", "b"],
  ["14:57:30", "83,825", "2", "TAKSIM", "SEKER", "r"],
  ["14:57:28", "83,850", "27", "SANKO", "MARBAS", "b"],
  ["14:57:25", "83,825", "1", "TAKSIM", "GEDIK", "r"],
  ["14:57:24", "83,850", "5", "EFG ISTAN", "MARBAS", "r"],
  ["14:57:24", "83,850", "37", "YAPI KREI", "MARBAS", "r"],
  ["14:57:24", "83,850", "15", "YAPI KREI", "TURKISH", "r"],
  ["14:57:24", "83,850", "3", "YAPI KREI", "GEDIK", "r"],
  ["14:57:24", "83,850", "1", "YAPI KREI", "SANKO", "r"],
];
const parts: [number, string][] = [
  [10, "#00f000"], [26, "#00f000"], [3, "#00c800"], [88, "#00d000"], [31, "#00b800"],
  [9, "#c00000"], [47, "#d80000"], [33, "#e80000"], [43, "#ff0000"], [15, "#ff0000"],
];

const OrderBook = () => (
  <BookFrame $x={12} $y={555} $w={343} $h={400}>
    <TitleBar>
      <CapButton aria-label="Close book"><Glyph d={CLOSE} /></CapButton>
      <Title>{"VIX0301010    XU30 Eki 10/111F_IX030101"}</Title>
      <CapButton aria-label="Detach"><Glyph d="M2 0h6v6H6V4H5v1H4v1H3v1H2v1H0V6h1V5h1V4h1V3h1V2H2z" /></CapButton>
      <CapButton aria-label="Menu"><Glyph d={DOWN} /></CapButton>
      <CapButton aria-label="Close"><Glyph d={CLOSE} /></CapButton>
    </TitleBar>
    <Block $top={2}>
      <Grid $w={314} $rh={11}>
        <Cols w={[50, 49, 51, 52, 56, 56]} />
        <tbody>
          {stats.map((s) => (
            <React.Fragment key={s.h[0]}>
              <tr>{s.h.map((t) => <Head key={t} $bg="#e0e0e0">{t}</Head>)}</tr>
              <tr>{s.v.map((t, i) => <Cell key={t} $c={s.c[i] || "#000"}>{t}</Cell>)}</tr>
            </React.Fragment>
          ))}
        </tbody>
      </Grid>
    </Block>
    <Block $bottom={1}>
      <Grid $w={316} $rh={15}>
        <Cols w={[58, 45, 60, 60, 45, 48]} />
        <thead>
          <tr>{["ALICILA", "N.LOT", "Maliyet", "SATICILA", "N.LOT", "Maliye"].map((t, i) => (
            <Head key={i} $a={i === 3 ? "left" : "right"}>{t}</Head>
          ))}</tr>
        </thead>
        <tbody>
          {brokers.map((r, n) => (
            <tr key={n}>{r.map((t, i) => (
              <Cell key={i} $a={i % 3 === 0 ? "left" : "right"} $c={n === 3 ? "#000" : i < 3 ? NAVY : RED}>{t}</Cell>
            ))}</tr>
          ))}
        </tbody>
      </Grid>
    </Block>
    <DepthBar>{parts.map(([n, c], i) => <DepthPart key={i} $n={n} $c={c} />)}</DepthBar>
    <Block $top={0}>
      <Grid $w={312} $rh={14} $bg="#efefef">
        <Cols w={[30, 46, 57, 56, 42, 25, 56]} />
        <thead>
          <tr>{["Emir", "Lot", "Alis", "Satis", "Lot", "Emi", "Saat"].map((t, i) => (
            <Head key={i} $a={i % 5 === 0 ? "left" : "center"} $box>{t}</Head>
          ))}</tr>
        </thead>
        <tbody>
          {depth.map((r, n) => (
            <tr key={n}>{r.map((t, i) => (
              <Cell key={i} $c={n === 5 ? "#0000e0" : "#000"} $bg={n === 5 ? "#fff" : undefined}>{t}</Cell>
            ))}</tr>
          ))}
        </tbody>
      </Grid>
    </Block>
    <Block $top={2} $bottom={1}>
      <Grid $w={313} $rh={13}>
        <Cols w={[62, 52, 38, 64, 80, 17]} />
        <thead>
          <tr>{["SAAT", "FIYAT", "LOT", "ALAN", "SATAN", ""].map((t, i) => (
            <Head key={i} $a={i === 1 || i === 2 ? "right" : "left"} $bg="#c0c0c0" $box>{t}</Head>
          ))}</tr>
        </thead>
        <tbody>
          {trades.map((r, n) => (
            <tr key={n}>{[...r.slice(0, 5), ""].map((t, i) => (
              <Cell key={i} $line={i < 5} $a={i === 1 || i === 2 ? "right" : "left"} $c={r[5] === "b" ? NAVY : RED}>{t}</Cell>
            ))}</tr>
          ))}
        </tbody>
      </Grid>
      <VScroll>
        <VButton $h={15} aria-label="Scroll up"><Tri d="M0 6h8L4 2z" s={6} /></VButton>
        <VButton $h={8} aria-label="Scroll thumb" />
        <VButton $h={15} $low aria-label="Scroll down"><Tri d="M0 2h8L4 6z" s={6} /></VButton>
      </VScroll>
    </Block>
    <NextPanel />
  </BookFrame>
);

/* ---------- index table ---------- */

const IndexFrame = styled(Frame)`
  padding: 6px 0 0 6px;
`;
const IndexTable = styled.table`
  width: 200px;
  table-layout: fixed;
  border-collapse: separate;
  border-spacing: 0;
  border-left: 1px solid #555;
  border-top: 1px solid #555;
  background: #fff;
  font: bold 14px/19px "Liberation Sans", Arial, sans-serif;
  th {
    background: #006aa0;
    color: #fff;
    font-size: 15px;
    border-right: 1px solid #fff;
    border-bottom: 1px solid #003a5a;
    padding: 0 0 0 2px;
    height: 19px;
    line-height: 18px;
  }
  th:last-child { text-align: left; padding-left: 4px; }
  td { padding: 0 4px; height: 19px; white-space: nowrap; }
  td:first-child { background: #d0d0d0; }
  td:last-child { color: #0000e0; }
`;

/* ---------- windows cut off at the left edge ---------- */

const SideFrame = styled(Frame)`
  padding: 6px 1px 0 0;
`;
const SideTools = styled.div`
  display: flex;
  height: 14px;
  gap: 2px;
  background: #222;
  padding: 1px 0;
`;
const SideTable = styled.table`
  width: 13px;
  border-spacing: 0;
  table-layout: fixed;
  font: 12px/15px "Liberation Sans", Arial, sans-serif;
  background: #fff;
  th, td { padding: 0; height: 15px; text-align: right; font-weight: bold; }
  th { background: #e8e8e8; border-bottom: 1px solid #333; }
  tr:nth-child(7) td { background: #ff0; }
`;

const Side = () => {
  const rows: [number, string][] = [
    [77, "50"], [117, "00"], [157, "50"], [197, "00"], [237, "50"], [277, "00"], [317, "50"], [357, "00"],
    [516, "00"], [537, "00"], [557, "00"], [578, "00"], [598, "00"],
  ];
  return (
    <>
      <SideFrame $x={-12} $y={43} $w={32} $h={604}>
        <SideTools>
          <CapButton aria-label="Minimize"><Glyph d={MIN} /></CapButton>
          <CapButton aria-label="Minimize"><Glyph d={MIN} /></CapButton>
        </SideTools>
        <PaneSvg width="100%" height="576" viewBox="-11 64 30 576" preserveAspectRatio="xMinYMin slice">
          {rows.map(([y, t]) => <text key={y} x="-2" y={y + 5} fill="#00e8f0">{t}</text>)}
          <rect x="-2" y="121" width="20" height="11" fill="#000" />
          <text x="-2" y="131" fill="#ffff00">88,</text>
          <g shapeRendering="crispEdges">
            <path d="M-11 65.500H20M-11 393.500H20" stroke="#80ff80" />
            <path d="M-11 395.500H20M-11 450.500H20M-11 506.500H20M-11 613.500H20" stroke="#fff" />
            <path d="M-11 394.500H20M-11 449.500H20M-11 505.500H20M-11 612.500H20" stroke="#909090" />
          </g>
          <svg x="-6" y="626" width="18" height="16"><RefreshIcon /></svg>
        </PaneSvg>
      </SideFrame>
      <Frame $x={-20} $y={650} $w={30} $h={160} />
      <SideFrame $x={-2} $y={814} $w={20} $h={150}>
        <SideTable>
          <thead><tr><th scope="col">n</th></tr></thead>
          <tbody>
            {["74", "10", "65", "04", "50", "33", "05", "98"].map((t, i) => <tr key={i}><td>{t}</td></tr>)}
          </tbody>
        </SideTable>
      </SideFrame>
    </>
  );
};

/* ---------- clock ---------- */

const Clock = styled.div`
  position: absolute;
  left: 715px;
  top: 20px;
  padding: 5px;
  border: 1px solid #333;
  border-bottom-color: #3ab8e0;
  border-right-color: #3ab8e0;
  border-radius: 6px;
  background: linear-gradient(#5a5a5a, #9a9a9a 50%, #808080);
  box-shadow: 0 1px 6px 3px rgba(0, 0, 0, 0.5);
`;
const Time = styled.time`
  display: block;
  width: 96px;
  border: 1px solid #111;
  background: #00407f;
  outline: 1px solid #aaa;
  color: #fff;
  text-align: center;
  font: bold 23px/32px "Liberation Sans", Arial, sans-serif;
`;

export default function App() {
  return (
    <Desktop>
      <GlobalStyle />
      <TopBlack />
      <TopBar />
      <Side />
      <Frame $x={479} $y={47} $w={433} $h={788} />
      <Chart15 />
      <Chart60 />
      <ChartDay />
      <OrderBook />
      <IndexFrame $x={1106} $y={879} $w={220} $h={100}>
        <IndexTable>
          <Cols w={[53, 71, 76]} />
          <thead><tr><th>SEMB</th><th>SON</th><th>ONCEKI</th></tr></thead>
          <tbody>
            <tr><td>XU100</td><td>65910,74</td><td>+</td></tr>
            <tr><td>XU030</td><td>83757,39</td><td>+</td></tr>
          </tbody>
        </IndexTable>
      </IndexFrame>
      <Clock><Time>14:57:32</Time></Clock>
    </Desktop>
  );
}
